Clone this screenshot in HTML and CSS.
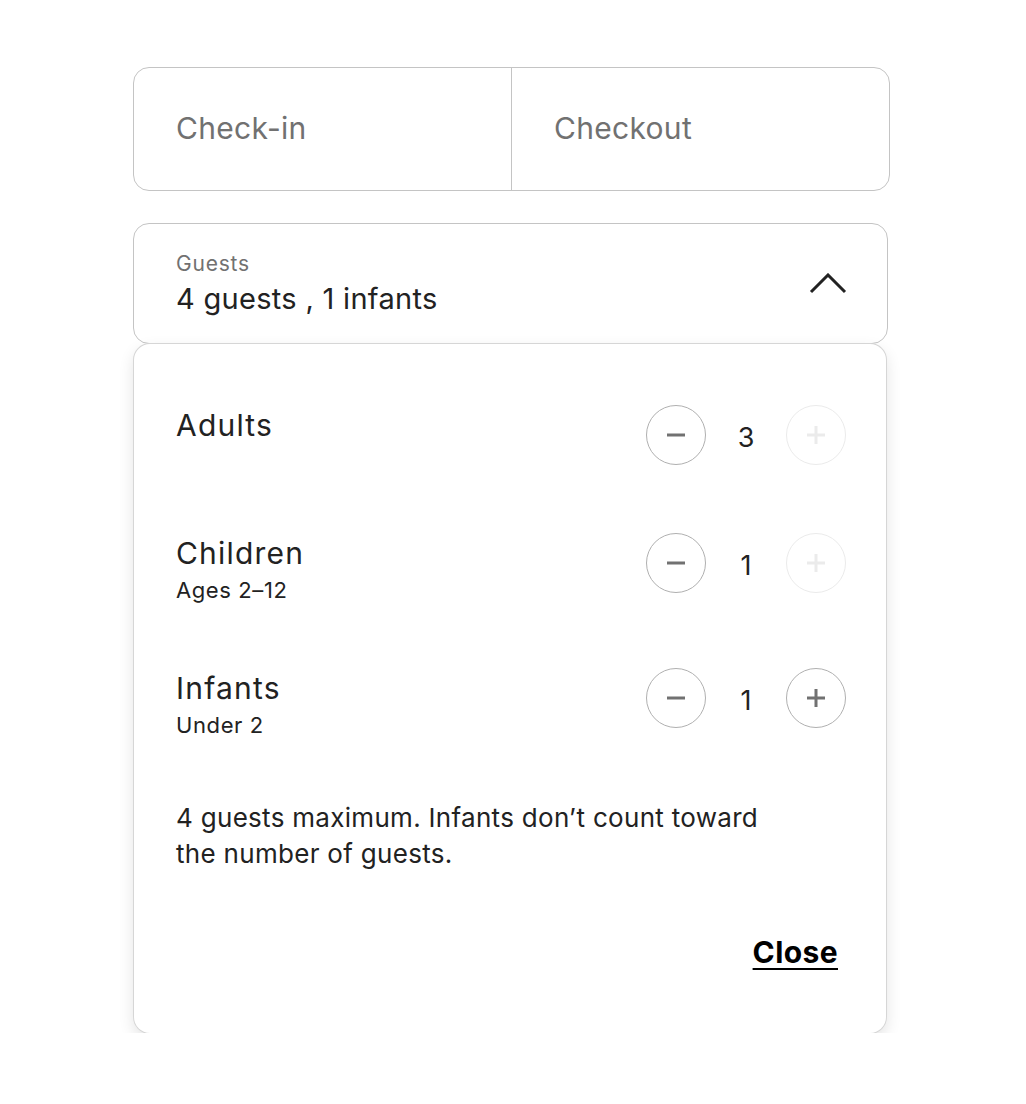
FILE: index.html
```html
<!DOCTYPE html>
<html lang="en">

<head>
    <meta charset="UTF-8">
    <title>Guests</title>
    <link rel="stylesheet" href="styles.css">
</head>

<body>
    <div class="booking">
        <div class="dates">
            <div class="date-field">Check-in</div>
            <div class="date-field">Checkout</div>
        </div>

        <div class="guests">
            <div class="guests-text">
                <div class="guests-label">Guests</div>
                <div class="guests-value">4 guests , 1 infants</div>
            </div>
            <svg class="chevron" width="38" height="22" viewBox="0 0 38 22">
                <path d="M2 19 L19 2 L36 19" fill="none" stroke="#222" stroke-width="3" />
            </svg>
        </div>

        <div class="panel">
            <div class="row">
                <div class="row-text">
                    <div class="row-title">Adults</div>
                </div>
                <div class="counter">
                    <button class="step">
                        <svg width="20" height="20" viewBox="0 0 20 20"><path d="M1 10 H19" stroke="#717171" stroke-width="3" /></svg>
                    </button>
                    <span class="count">3</span>
                    <button class="step disabled">
                        <svg width="20" height="20" viewBox="0 0 20 20"><path d="M1 10 H19 M10 1 V19" stroke="#ebebeb" stroke-width="3" /></svg>
                    </button>
                </div>
            </div>

            <div class="row">
                <div class="row-text">
                    <div class="row-title">Children</div>
                    <div class="row-sub">Ages 2–12</div>
                </div>
                <div class="counter">
                    <button class="step">
                        <svg width="20" height="20" viewBox="0 0 20 20"><path d="M1 10 H19" stroke="#717171" stroke-width="3" /></svg>
                    </button>
                    <span class="count">1</span>
                    <button class="step disabled">
                        <svg width="20" height="20" viewBox="0 0 20 20"><path d="M1 10 H19 M10 1 V19" stroke="#ebebeb" stroke-width="3" /></svg>
                    </button>
                </div>
            </div>

            <div class="row">
                <div class="row-text">
                    <div class="row-title">Infants</div>
                    <div class="row-sub">Under 2</div>
                </div>
                <div class="counter">
                    <button class="step">
                        <svg width="20" height="20" viewBox="0 0 20 20"><path d="M1 10 H19" stroke="#717171" stroke-width="3" /></svg>
                    </button>
                    <span class="count">1</span>
                    <button class="step">
                        <svg width="20" height="20" viewBox="0 0 20 20"><path d="M1 10 H19 M10 1 V19" stroke="#717171" stroke-width="3" /></svg>
                    </button>
                </div>
            </div>

            <p class="note">4 guests maximum. Infants don’t count toward the number of guests.</p>

            <div class="actions">
                <a href="#" class="close">Close</a>
            </div>
        </div>
    </div>
</body>

</html>
```

FILE: styles.css
```css
body {
    margin: 0;
    font-family: Inter, "Noto Sans", Arial, sans-serif;
    color: #222222;
    background: #ffffff;
}

.booking {
    width: 757px;
    margin: 0 0 0 133px;
    padding-top: 67px;
}

.dates {
    display: flex;
    height: 124px;
    border: 1.5px solid #c4c4c4;
    border-radius: 16px;
    box-sizing: border-box;
}

.date-field {
    flex: 1;
    display: flex;
    align-items: center;
    padding-left: 42px;
    padding-bottom: 2px;
    font-size: 30px;
    letter-spacing: 0.3px;
    color: #717171;
}

.date-field + .date-field {
    border-left: 1.5px solid #c4c4c4;
}

.guests {
    display: flex;
    align-items: center;
    justify-content: space-between;
    width: 755px;
    height: 121px;
    margin-top: 32px;
    padding: 0 42px;
    box-sizing: border-box;
    border: 1.5px solid #c4c4c4;
    border-radius: 16px;
}

.guests-label {
    font-size: 21px;
    letter-spacing: 0.8px;
    color: #717171;
    line-height: 26px;
}

.guests-value {
    font-size: 29px;
    letter-spacing: 0.3px;
    line-height: 36px;
    margin-top: 4px;
}

.chevron {
    margin-right: -2px;
}

.panel {
    width: 752px;
    margin-left: 1px;
    box-sizing: border-box;
    padding: 63px 40px 63px 42px;
    border-radius: 16px;
    background: #ffffff;
    box-shadow: 0 0 0 1px #d6d6d6, 0 6px 16px rgba(0, 0, 0, 0.12);
}

.row {
    display: flex;
    justify-content: space-between;
    align-items: flex-start;
    min-height: 64px;
}

.row + .row {
    margin-top: 64px;
}

.row-title {
    font-size: 30px;
    letter-spacing: 1.2px;
    line-height: 36px;
}

.row-sub {
    font-size: 22px;
    letter-spacing: 0.6px;
    line-height: 32px;
    margin-top: 3px;
    color: #222222;
}

.counter {
    display: flex;
    align-items: center;
    margin-top: -2px;
}

.step {
    width: 60px;
    height: 60px;
    border-radius: 50%;
    border: 1.5px solid #b0b0b0;
    background: #ffffff;
    display: flex;
    align-items: center;
    justify-content: center;
    padding: 0;
}

.step.disabled {
    border-color: #ebebeb;
}

.count {
    width: 80px;
    text-align: center;
    font-size: 27px;
    padding-top: 4px;
}

.note {
    margin: 59px 0 0;
    max-width: 610px;
    font-size: 26px;
    letter-spacing: 0.3px;
    line-height: 36px;
}

.actions {
    display: flex;
    justify-content: flex-end;
    margin-top: 62px;
    padding-right: 8px;
}

.close {
    font-size: 30px;
    font-weight: 700;
    letter-spacing: 0.4px;
    line-height: 36px;
    color: #000000;
    text-decoration: underline;
    text-underline-offset: 5px;
    text-decoration-thickness: 2px;
}
```
